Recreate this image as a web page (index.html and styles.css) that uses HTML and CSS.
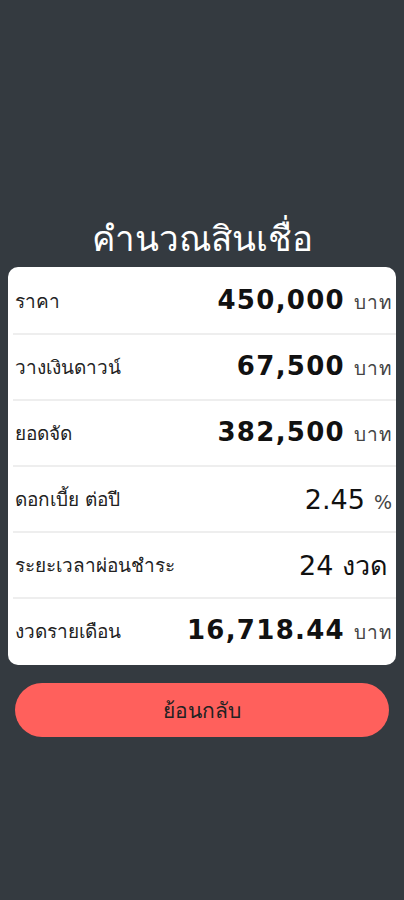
FILE: index.html
```html
<!DOCTYPE html>
<html lang="th">
<head>
    <meta charset="UTF-8">
    <meta name="viewport" content="width=device-width, initial-scale=1.0">
    <title>คำนวณสินเชื่อ</title>
    <link rel="stylesheet" href="styles.css">
</head>
<body>
    <div class="container">
        <h2>คำนวณสินเชื่อ</h2>
        <div class="card">
            <div class="row">
                <span class="label">ราคา</span>
                <span class="value"><b>450,000</b><small>บาท</small></span>
            </div>
            <div class="row">
                <span class="label">วางเงินดาวน์</span>
                <span class="value"><b>67,500</b><small>บาท</small></span>
            </div>
            <div class="row">
                <span class="label">ยอดจัด</span>
                <span class="value"><b>382,500</b><small>บาท</small></span>
            </div>
            <div class="row">
                <span class="label">ดอกเบี้ย ต่อปี</span>
                <span class="value"><em>2.45</em><small>%</small></span>
            </div>
            <div class="row">
                <span class="label">ระยะเวลาผ่อนชำระ</span>
                <span class="value plain"><em>24 งวด</em></span>
            </div>
            <div class="row">
                <span class="label">งวดรายเดือน</span>
                <span class="value"><b>16,718.44</b><small>บาท</small></span>
            </div>
        </div>
        <button type="button" class="back">ย้อนกลับ</button>
    </div>
</body>
</html>
```

FILE: styles.css
```css
body {
    font-family: 'DejaVu Sans', sans-serif;
    margin: 0;
    padding: 0;
    background-color: #343a40;
    min-height: 900px;
}

.container {
    padding: 219px 8px 0;
}

h2 {
    margin: 0 0 7px;
    font-size: 35px;
    line-height: 41px;
    font-weight: 500;
    text-align: center;
    color: #fff;
}

.card {
    background-color: #fff;
    border-radius: 10px;
    padding: 2px 0;
}

.row {
    display: flex;
    align-items: center;
    justify-content: space-between;
    min-height: 64px;
    margin-left: 5px;
    padding: 0 3px 0 2px;
    border-bottom: 2px solid #eeeeee;
}

.row:last-child {
    border-bottom: none;
}

.label {
    font-size: 19px;
    color: #222;
}

.value {
    display: flex;
    align-items: baseline;
    gap: 9px;
    color: #111;
}

.value b {
    font-size: 26px;
    font-weight: 700;
    letter-spacing: 1.3px;
}

.value em {
    font-style: normal;
    font-size: 27px;
}

.value small {
    font-size: 19px;
    letter-spacing: 1px;
    color: #444;
}

.value.plain {
    padding-right: 5px;
}

.back {
    display: block;
    width: calc(100% - 14px);
    height: 54px;
    margin: 18px 7px 0;
    border: none;
    border-radius: 27px;
    background-color: #ff605c;
    color: #222;
    font-family: inherit;
    font-size: 21px;
    cursor: pointer;
}
```
